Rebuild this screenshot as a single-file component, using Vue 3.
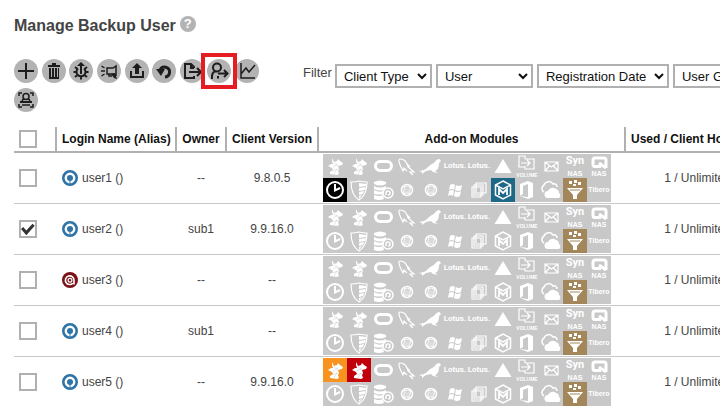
<template>
  <div class="page">
    <!-- module glyphs, shared by every row -->
    <svg class="defs" aria-hidden="true">
      <symbol id="m-fox" viewBox="0 0 24 24">
        <path fill="currentColor" d="M9 4l2 4 3-1 1-2 2 2 3 2-1 2-4 1 1 3-1 2 1 3-2 1-7-1 0-2 3-2-1-2-4-2 3-2 2 0-1-3z" />
        <path stroke="#999" stroke-width=".5" stroke-opacity=".5" fill="none" d="M11 9l4 3M10 13l5-3M9 17l6-2M11 20l3-5" />
      </symbol>
      <symbol id="m-ring" viewBox="0 0 24 24">
        <rect x="4.500" y="7.500" width="16" height="9" rx="4.500" fill="none" stroke="currentColor" stroke-width="3" />
      </symbol>
      <symbol id="m-dolphin" viewBox="0 0 24 24">
        <path fill="none" stroke="currentColor" stroke-width="1.200" d="M6 13C4 9 3 5 5 5c4 0 7 3 8 8l6 5-4 0 3 3M6 13l2 4 1-3 3 3M11 9l4 4" />
      </symbol>
      <symbol id="m-seal" viewBox="0 0 24 24">
        <path fill="currentColor" d="M0 17l5-1c3-1 5-5 8-6 3-1 4-5 7-5 1 0 1 1 2 2l-2 2c0 4-1 7-4 8l3 2-5-1-2-2-5 1-4 3 0-2z" />
      </symbol>
      <symbol id="m-triangle" viewBox="0 0 24 24">
        <path fill="currentColor" d="M12 5l8.500 14h-17z" />
      </symbol>
      <symbol id="m-volume" viewBox="0 0 24 24">
        <path fill="none" stroke="currentColor" stroke-width="1.200" d="M10 5V2H4v11h6M10 5h9v10h-9v-3M6 9h9M12 6l3 3-3 3" />
      </symbol>
      <symbol id="m-mail" viewBox="0 0 24 24">
        <path fill="none" stroke="currentColor" stroke-width="1.200" d="M6 8h13v9H6zM6 8l6.500 5L19 8M6 17l4.500-5M19 17l-4.500-5" />
      </symbol>
      <symbol id="m-qnap" viewBox="0 0 24 24">
        <path fill="none" stroke="currentColor" stroke-width="3" d="M14 12.500H8q-2 0-2-2V6q0-2 2-2h9q2 0 2 2v8M12 9l7 5" />
      </symbol>
      <symbol id="m-clock" viewBox="0 0 24 24">
        <circle cx="12" cy="12" r="8" fill="none" stroke="currentColor" stroke-width="2" />
        <path fill="none" stroke="currentColor" stroke-width="2" d="M12 6v6.500l5-2.500" />
      </symbol>
      <symbol id="m-shield" viewBox="0 0 24 24">
        <path fill="none" stroke="currentColor" stroke-width="1.200" d="M4 4q4 0 8-1 4 1 8 1 0 13-8 18Q4 17 4 4z" />
        <path fill="currentColor" d="M12 5l7 1v2l-7 1zM12 10l7-1-1 3-6 1zM12 14l5-1-1 3-4 1zM12 18l3-1-3 4z" />
      </symbol>
      <symbol id="m-database" viewBox="0 0 24 24">
        <path fill="currentColor" d="M3 4q6-3 12 0v2q-6 3-12 0zM3 8q6 3 12 0v3q-6 3-12 0zM3 12q5 3 9 1v3q-4 1-9 0zM3 17q5 2 9 0l1 4q-5 2-10 0z" />
        <circle cx="17" cy="15" r="5" fill="#c8c8c8" stroke="currentColor" stroke-width="1.500" />
        <path fill="none" stroke="currentColor" stroke-width="1.500" d="M15 17v-2a2 2 0 1 1 2 2" />
      </symbol>
      <symbol id="m-winring" viewBox="0 0 24 24">
        <circle cx="12" cy="12" r="5.500" fill="none" stroke="currentColor" stroke-width="1.500" />
        <path fill="currentColor" d="M10 9.500l5 0-1 5.500H9z" opacity=".35" />
        <path fill="none" stroke="currentColor" stroke-width="1" d="M9.500 8.500q3-1 6 .500l-1 6.500q-3-1-6 0z" />
      </symbol>
      <symbol id="m-windows" viewBox="0 0 24 24">
        <path fill="currentColor" d="M7 7q3-2 5 0l-1 5q-2-2-5 0zM13 7q2 2 6 0l-1 5q-3 2-6 0zM6 13q3-2 5 0l-1 5q-2-2-5 0zM12 13q2 2 6 0l-1 5q-3 2-6 0z" />
      </symbol>
      <symbol id="m-stack" viewBox="0 0 24 24">
        <path fill="none" stroke="currentColor" stroke-width="1.200" d="M5 9h9v10H5zM7 7h9v10H7zM9 5h10v10H9z" />
      </symbol>
      <symbol id="m-cube" viewBox="0 0 24 24">
        <path fill="none" stroke="currentColor" stroke-width="1.500" d="M12 3l7.500 4v10L12 21l-7.500-4V7zM4.500 7l7.500 4 7.500-4" />
        <path fill="none" stroke="currentColor" stroke-width="1.800" d="M8 17v-6l4 4 4-4v6" />
      </symbol>
      <symbol id="m-office" viewBox="0 0 24 24">
        <path fill="currentColor" fill-rule="evenodd" d="M5 6l8-3 5 2v14l-5 2-8-3 8 1V6L8 8v8l-3 2z" />
      </symbol>
      <symbol id="m-cloud" viewBox="0 0 24 24">
        <path fill="none" stroke="currentColor" stroke-width="1.500" d="M5 14a4 4 0 0 1 0-7 5 5 0 0 1 9-1 3 3 0 0 1 4 3" />
        <path fill="currentColor" d="M9 20a3.500 3.500 0 0 1 0-7 5 5 0 0 1 8-2 4 4 0 0 1 3 4 3 3 0 0 1 0 5z" />
      </symbol>
      <symbol id="m-funnel" viewBox="0 0 24 24">
        <path fill="currentColor" d="M4 10h16l-6 7v4h-4v-4zM6 3h3v3H6zM11 2h3v3h-3zM15 4h3v3h-3zM10 6h3v2h-3z" />
        <path stroke="#a3875a" stroke-width="1" d="M7 12h10" />
      </symbol>
    </svg>

    <header class="title-bar">
      <h1>Manage Backup User</h1>
      <button type="button" class="help" aria-label="Help">?</button>
    </header>

    <div class="controls">
      <div class="toolbar">
        <template v-for="tool in tools" :key="tool.name">
          <button type="button" class="tool" :class="{ marked: tool.marked }" :aria-label="tool.name">
            <svg viewBox="0 0 24 24" fill="none" stroke="currentColor" :stroke-width="tool.width || 2">
              <path v-if="tool.fill" :d="tool.fill" fill="currentColor" stroke="none" />
              <path v-if="tool.line" :d="tool.line" />
            </svg>
          </button>{{ ' ' }}
        </template>
      </div>

      <div class="filter">
        <label for="filter-0">Filter</label>
        <div class="filter-selects">
          <select
            v-for="(f, i) in filters"
            :id="`filter-${i}`"
            :key="f.label"
            :class="{ wide: f.wide }"
            :aria-label="f.label"
          >
            <option>{{ f.label }}</option>
          </select>
        </div>
      </div>
    </div>

    <table class="user-table">
      <colgroup>
        <col class="col-check" />
        <col class="col-login" />
        <col class="col-owner" />
        <col class="col-version" />
        <col class="col-modules" />
        <col />
      </colgroup>
      <thead>
        <tr>
          <th class="check-cell">
            <input type="checkbox" :checked="allChecked" aria-label="Select all" @change="toggleAll" />
          </th>
          <th class="left">Login Name (Alias)</th>
          <th>Owner</th>
          <th>Client Version</th>
          <th>Add-on Modules</th>
          <th class="left">Used / Client Host Quota</th>
        </tr>
      </thead>
      <tbody>
        <tr v-for="user in users" :key="user.name">
          <td class="check-cell">
            <input v-model="user.checked" type="checkbox" :aria-label="user.name" />
          </td>
          <td class="login-cell">
            <div class="login">
              <svg v-if="user.type === 'acb'" viewBox="0 0 16 16">
                <circle cx="8" cy="8" r="8" fill="#7a1216" />
                <path d="M10.800 11.200A4.300 4.300 0 1 1 12 8v4.500" fill="none" stroke="#fff" stroke-width="1.600" />
                <circle cx="8" cy="8.300" r="1.900" fill="none" stroke="#fff" stroke-width="1.200" />
              </svg>
              <svg v-else viewBox="0 0 16 16">
                <circle cx="8" cy="8" r="6.700" fill="#fff" stroke="#2f74a8" stroke-width="2.600" />
                <circle cx="8" cy="8" r="3" fill="#2f74a8" />
                <path d="M8 10v5" stroke="#2f74a8" stroke-width="1" />
              </svg>
              <span>{{ user.name }} ()</span>
            </div>
          </td>
          <td>{{ user.owner }}</td>
          <td>{{ user.version }}</td>
          <td class="modules-cell">
            <div class="modules">
              <div v-for="(m, i) in modules" :key="i" class="module" :class="[m.color, user.active[i]]">
                <svg v-if="m.icon" viewBox="0 0 24 24">
                  <use :href="`#m-${m.icon}`" />
                </svg>
                <span v-if="m.text" :class="m.size">{{ m.text }}</span>
                <span v-if="m.caption" class="caption" :class="m.captionSize">{{ m.caption }}</span>
              </div>
            </div>
          </td>
          <td>1 / Unlimited</td>
        </tr>
      </tbody>
    </table>
  </div>
</template>

<script setup>
import { ref, computed } from 'vue'

const tools = [
  { name: 'Add', line: 'M12 4v16M4 12h16' },
  { name: 'Delete', fill: 'M6 6h4V4h4v2h4v2H6zM7 9h2v11H7zM10 9h2v11h-2zM13 9h2v11h-2zM16 9h1v11h-1zM7 18h10v2H7z' },
  {
    name: 'Settings',
    fill: 'M12 3l4 4h-3v8h-2V7H8z',
    line: 'M9 9.500a4.500 4.500 0 1 0 6 0M6 8l2.500 2M4.500 13H8M6 18l2.500-2M12 17v3.500M18 18l-2.500-2M19.500 13H16M18 8l-2.500 2'
  },
  {
    name: 'Broadcast',
    width: 1.5,
    fill: 'M14 15l4-1 2 6-3-1z',
    line: 'M4.500 7l3 2M4 12h4M4.500 17l3-2M10 9h6l3-2v9l-3-1h-6zM12 15v2h3'
  },
  { name: 'Upload', fill: 'M12 4l5 5h-3v6h-4V9H7zM5 12h2v5h10v-5h2v7H5z' },
  { name: 'Restore', width: 3, fill: 'M4 10l9 0-4 7z', line: 'M8 11a5 5 0 1 1 5 7' },
  { name: 'Export', line: 'M14 9V8l-3-3H5v14h9v-2M11 5v4h3M9 13h11M17 9l4 4-4 4' },
  {
    name: 'Move user',
    marked: true,
    line: 'M10 4.500a4 4 0 1 1 0 8 4 4 0 1 1 0-8M5 20v-3q0-3 3-5M11 19.500v-2.500M11 14.500h9M17 11l3.500 3.500L17 18'
  },
  { name: 'Statistics', width: 1.5, line: 'M6 4v15h14M6 15l5-6 3 4 6-7' },
  {
    name: 'Scan user',
    width: 1.5,
    fill: 'M6 13h12v2H6z',
    line: 'M5 8V5h3M16 5h3v3M5 16v3h3M16 19h3v-3M12 5.500a3 3 0 1 1 0 6 3 3 0 1 1 0-6M9.500 10.500L8 13M14.500 10.500L16 13M8 17h8'
  }
]

const filters = [
  { label: 'Client Type' },
  { label: 'User' },
  { label: 'Registration Date', wide: true },
  { label: 'User Group' }
]

const modules = [
  { icon: 'fox' },
  { icon: 'fox' },
  { icon: 'ring' },
  { icon: 'dolphin' },
  { icon: 'seal' },
  { text: 'Lotus.', size: 'lotus' },
  { text: 'Lotus.', size: 'lotus' },
  { icon: 'triangle' },
  { icon: 'volume', caption: 'VOLUME', captionSize: 'tiny' },
  { icon: 'mail' },
  { text: 'Syn', size: 'syn', caption: 'NAS' },
  { icon: 'qnap', caption: 'NAS' },
  { icon: 'clock' },
  { icon: 'shield' },
  { icon: 'database' },
  { icon: 'winring' },
  { icon: 'winring' },
  { icon: 'windows' },
  { icon: 'stack' },
  { icon: 'cube' },
  { icon: 'office' },
  { icon: 'cloud' },
  { icon: 'funnel', color: 'tan' },
  { text: 'Tibero', size: 'tibero' }
]

// active: module index -> colour class
const users = ref([
  { name: 'user1', type: 'obm', owner: '--', version: '9.8.0.5', checked: false, active: { 12: 'black', 19: 'blue' } },
  { name: 'user2', type: 'obm', owner: 'sub1', version: '9.9.16.0', checked: true, active: {} },
  { name: 'user3', type: 'acb', owner: '--', version: '--', checked: false, active: {} },
  { name: 'user4', type: 'obm', owner: 'sub1', version: '--', checked: false, active: {} },
  { name: 'user5', type: 'obm', owner: '--', version: '9.9.16.0', checked: false, active: { 0: 'orange', 1: 'red' } }
])

const allChecked = computed(() => users.value.every(u => u.checked))

function toggleAll(e) {
  users.value.forEach(u => {
    u.checked = e.target.checked
  })
}
</script>

<style>
body {
  background: #fff;
}
</style>

<style scoped>
.page {
  padding: 16px 0 0 14px;
  overflow: hidden;
  font-family: "Liberation Sans", Arial, sans-serif;
  font-size: 12px;
  color: #444;
}

.defs {
  position: absolute;
  width: 0;
  height: 0;
}

.title-bar {
  display: flex;
  align-items: flex-start;
  gap: 4px;
  margin-bottom: 23px;
}

h1 {
  margin: 0;
  font-size: 16px;
  line-height: 20px;
}

.help {
  width: 16px;
  height: 16px;
  padding: 0;
  border: 0;
  border-radius: 50%;
  background: #b3b3b3;
  color: #fff;
  font: bold 13px/16px "Liberation Sans", Arial, sans-serif;
}

.controls {
  display: flex;
  align-items: flex-start;
  gap: 24px;
  margin-bottom: 10px;
}

.toolbar {
  flex: 0 0 265px;
  font-size: 13px;
  line-height: 16px;
}

.tool {
  position: relative;
  width: 24px;
  height: 24px;
  margin: 0 0 5px;
  padding: 0;
  border: 0;
  border-radius: 50%;
  background: #b3b3b3;
  color: #1d1d1d;
  vertical-align: top;
  cursor: pointer;
}

.tool svg {
  display: block;
  width: 24px;
  height: 24px;
}

.tool.marked {
  z-index: 1;
}

.tool.marked::after {
  content: "";
  position: absolute;
  inset: -6px;
  border: 4px solid #e51c24;
}

.filter {
  display: flex;
  gap: 3px;
  padding-top: 5px;
  font-size: 13px;
  line-height: 18px;
}

.filter-selects {
  display: flex;
  gap: 4px;
}

select {
  flex: none;
  width: 97px;
  height: 24px;
  padding: 0 0 0 3px;
  border: 2px solid #b0b0b0;
  border-radius: 0;
  background: #fff;
  color: #111;
  font: 13px "Liberation Sans", Arial, sans-serif;
}

select.wide {
  width: 132px;
}

.user-table {
  width: 100%;
  min-width: 757px;
  table-layout: fixed;
  border-collapse: separate;
  border-spacing: 0;
}

.col-check {
  width: 43px;
}

.col-login {
  width: 120px;
}

.col-owner {
  width: 50px;
}

.col-version {
  width: 92px;
}

.col-modules {
  width: 307px;
}

th {
  height: 24px;
  padding: 0;
  border-right: 2px solid #b0b0b0;
  border-bottom: 2px solid #b0b0b0;
  color: #111;
  font-weight: bold;
  text-align: center;
  white-space: nowrap;
  overflow: hidden;
}

th.left {
  padding-left: 5px;
  text-align: left;
}

td {
  height: 50px;
  padding: 0 2px 0 0;
  border-bottom: 1px solid #c8c8c8;
  text-align: center;
}

tbody tr:last-child td {
  border-bottom: 0;
}

th.check-cell,
td.check-cell {
  padding-left: 5px;
  text-align: left;
}

input[type="checkbox"] {
  display: block;
  appearance: none;
  box-sizing: border-box;
  width: 18px;
  height: 18px;
  margin: 0;
  border: 2px solid #b0b0b0;
  background: #fff;
}

input[type="checkbox"]:checked::after {
  content: "";
  display: block;
  width: 14px;
  height: 14px;
  background: #333;
  clip-path: polygon(0 50%, 16% 36%, 38% 60%, 82% 12%, 98% 26%, 38% 94%);
}

td.login-cell {
  padding-left: 5px;
}

.login {
  display: flex;
  align-items: center;
  gap: 4px;
}

.login svg {
  width: 16px;
  height: 16px;
}

td.modules-cell {
  padding: 0 2px 0 4px;
}

.modules {
  display: grid;
  grid-template-columns: repeat(12, 24px);
  grid-auto-rows: 24px;
  width: max-content;
  color: #fff;
  font-weight: bold;
}

.module {
  position: relative;
  display: flex;
  flex-direction: column;
  align-items: center;
  justify-content: center;
  background: #c8c8c8;
}

.module svg {
  position: absolute;
  inset: 0;
  width: 24px;
  height: 24px;
}

.lotus {
  font: bold 8px/10px Roboto, sans-serif;
}

.syn {
  font: bold 11px/14px Roboto, sans-serif;
}

.tibero {
  font-size: 7px;
  line-height: 8px;
}

.caption {
  margin-top: auto;
  font-size: 7px;
  line-height: 8px;
}

.caption.tiny {
  font-size: 5px;
  line-height: 6px;
}

.module.tan {
  background: #a3875a;
}

.module.black {
  background: #000;
}

.module.blue {
  background: #1d6887;
}

.module.orange {
  background: #f7931e;
}

.module.red {
  background: #c0000b;
}
</style>
